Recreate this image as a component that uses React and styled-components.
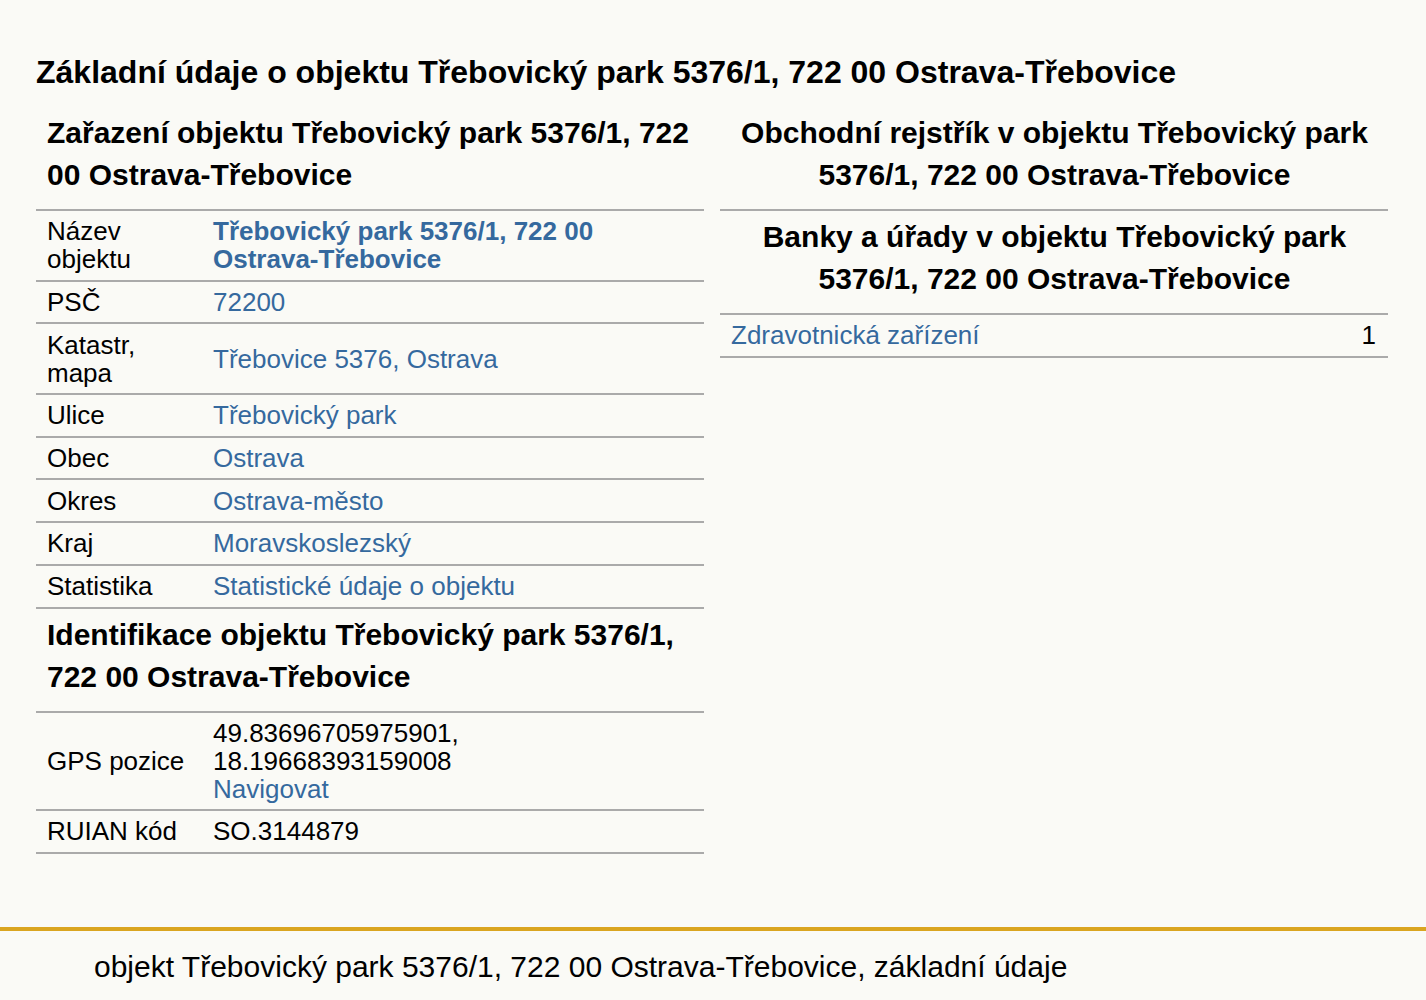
import React from "react";
import styled, { createGlobalStyle } from "styled-components";

const GlobalStyle = createGlobalStyle`
  html, body {
    margin: 0;
    padding: 0;
    background: #fafaf6;
  }
  body {
    font-family: "Liberation Sans", Arial, sans-serif;
    color: #000;
  }
`;

const Page = styled.div`
  width: 1426px;
  min-height: 1000px;
  display: flex;
  flex-direction: column;
`;

const Main = styled.main`
  padding: 52px 38px 0 36px;
`;

const Title = styled.h1`
  margin: 0 0 15px;
  font-size: 32px;
  line-height: 40px;
  font-weight: bold;
`;

const Columns = styled.div`
  display: grid;
  grid-template-columns: 1fr 1fr;
  gap: 16px;
  align-items: start;
`;

const Column = styled.section`
  display: flex;
  flex-direction: column;
`;

const Heading = styled.h2`
  margin: 0;
  padding: 5px 10px 13px 11px;
  font-size: 30px;
  line-height: 42px;
  font-weight: bold;
  text-align: ${({ $center }) => ($center ? "center" : "left")};
  border-bottom: 2px solid #aaa;
`;

const Row = styled.div`
  display: grid;
  grid-template-columns: ${({ $wide }) => ($wide ? "1fr auto" : "166px 1fr")};
  align-items: center;
  padding: 6.3px 12px 6.4px 11px;
  min-height: 28px;
  border-bottom: 2px solid #aaa;
  font-size: 26px;
  line-height: 28px;
`;

const Label = styled.div`
  padding-right: 12px;
`;

const Value = styled.div``;

const Link = styled.a`
  color: #35699e;
  text-decoration: none;
  font-weight: ${({ $bold }) => ($bold ? "bold" : "normal")};
  cursor: pointer;
`;

const Footer = styled.footer`
  margin-top: auto;
  border-top: 4px solid #daa520;
  padding: 17px 94px 14px;
`;

const FooterText = styled.p`
  margin: 0;
  font-size: 30px;
  line-height: 38px;
`;

const address = "Třebovický park 5376/1, 722 00 Ostrava-Třebovice";

const zarazeni = [
  { label: "Název objektu", value: address, bold: true },
  { label: "PSČ", value: "72200" },
  { label: "Katastr, mapa", value: "Třebovice 5376, Ostrava" },
  { label: "Ulice", value: "Třebovický park" },
  { label: "Obec", value: "Ostrava" },
  { label: "Okres", value: "Ostrava-město" },
  { label: "Kraj", value: "Moravskoslezský" },
  { label: "Statistika", value: "Statistické údaje o objektu" },
];

export default function App() {
  return (
    <Page>
      <GlobalStyle />
      <Main>
        <Title>Základní údaje o objektu {address}</Title>
        <Columns>
          <Column>
            <Heading>Zařazení objektu {address}</Heading>
            {zarazeni.map((row) => (
              <Row key={row.label}>
                <Label>{row.label}</Label>
                <Value>
                  <Link $bold={row.bold}>{row.value}</Link>
                </Value>
              </Row>
            ))}
            <Heading>Identifikace objektu {address}</Heading>
            <Row>
              <Label>GPS pozice</Label>
              <Value>
                49.83696705975901,
                <br />
                18.19668393159008
                <br />
                <Link>Navigovat</Link>
              </Value>
            </Row>
            <Row>
              <Label>RUIAN kód</Label>
              <Value>SO.3144879</Value>
            </Row>
          </Column>
          <Column>
            <Heading $center>Obchodní rejstřík v objektu {address}</Heading>
            <Heading $center>Banky a úřady v objektu {address}</Heading>
            <Row $wide>
              <Link>Zdravotnická zařízení</Link>
              <span>1</span>
            </Row>
          </Column>
        </Columns>
      </Main>
      <Footer>
        <FooterText>objekt {address}, základní údaje</FooterText>
      </Footer>
    </Page>
  );
}
